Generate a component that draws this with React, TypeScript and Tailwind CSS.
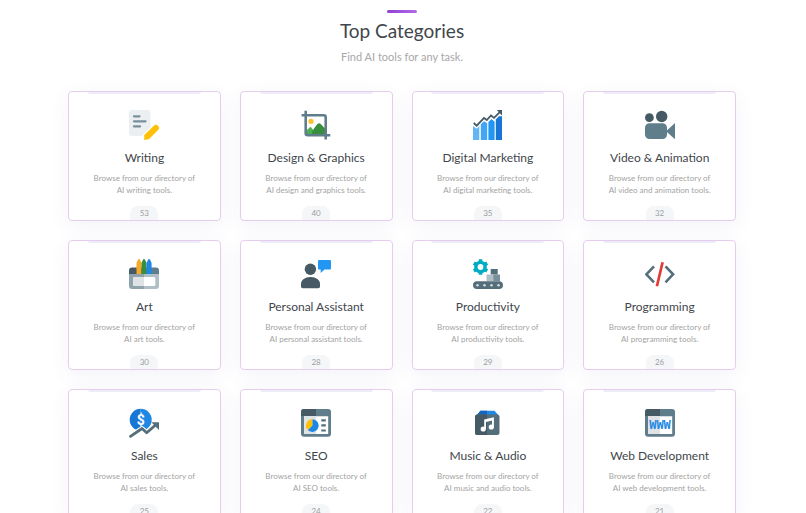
import React from "react";

interface Category {
  name: string;
  topic: string;
  count: number;
  icon: React.ReactNode;
}

const categories: Category[] = [
  {
    name: "Writing",
    topic: "AI writing tools.",
    count: 53,
    icon: (
      <>
        <path d="M3 0h15.5a3 3 0 0 1 3 3v14.5L13 26H3a3 3 0 0 1-3-3V3a3 3 0 0 1 3-3z" fill="#eceff1" />
        <path d="M5 6.3h5.5M5 11.3h11.5M5 16.4h6" stroke="#78909c" strokeWidth="2.3" strokeLinecap="round" />
        <path
          d="M15.2 25l9.6-9.3a3 3 0 0 1 4.3 4.3L19.8 29.2l-4.6.8z"
          fill="#ffc107"
          stroke="#fff"
          strokeWidth="2"
          paintOrder="stroke"
        />
      </>
    ),
  },
  {
    name: "Design & Graphics",
    topic: "AI design and graphics tools.",
    count: 40,
    icon: (
      <>
        <circle cx="10" cy="11.3" r="2.6" fill="#fbc02d" />
        <path d="M5 21l4.5-4.3L16 24.5H5z" fill="#4caf50" />
        <path d="M10.5 24.5c1-5 4-8 6-10.4a2.2 2.2 0 0 1 3.2-.2l4.3 4.6v6z" fill="#388e3c" />
        <path
          d="M4.7.7v22.6a2 2 0 0 0 2 2h22.6M.6 5.3h22.1a2 2 0 0 1 2 2v22.1"
          fill="none"
          stroke="#607d8b"
          strokeWidth="2.6"
        />
      </>
    ),
  },
  {
    name: "Digital Marketing",
    topic: "AI digital marketing tools.",
    count: 35,
    icon: (
      <>
        <path d="M0 16l3.7 2.7L6.3 16v14H0z" fill="#64b5f6" />
        <path d="M7.8 14.3L11 11.3l3.2 2V30H7.8z" fill="#42a5f5" />
        <path d="M15.4 12.1L18.5 9l3.1 2.7V30h-6.2z" fill="#2196f3" />
        <path d="M22.8 9.5l3-3.2H29V30h-6.2z" fill="#1976d2" />
        <path d="M.7 13l3 2.7L11 8l2.8 2L18 5.5l3 2.4 5.8-5.7" fill="none" stroke="#455a64" strokeWidth="1.8" />
        <path d="M23.8 0H29v5.4z" fill="#455a64" />
      </>
    ),
  },
  {
    name: "Video & Animation",
    topic: "AI video and animation tools.",
    count: 32,
    icon: (
      <>
        <circle cx="4.4" cy="7.7" r="4.4" fill="#455a64" />
        <circle cx="16.7" cy="6.5" r="5.7" fill="#455a64" />
        <rect y="13.3" width="22" height="15.7" rx="4.5" fill="#607d8b" />
        <path d="M21 21.2l9-8.2v16.3z" fill="#607d8b" />
      </>
    ),
  },
  {
    name: "Art",
    topic: "AI art tools.",
    count: 30,
    icon: (
      <>
        <path d="M0 16v-4.5a3 3 0 0 1 3-3h12V16z" fill="#455a64" />
        <path d="M15 8.5h12a3 3 0 0 1 3 3V16H15z" fill="#607d8b" />
        <path d="M7.5 15V4L9.2.3h1.6L12.5 4v11z" fill="#f9a825" />
        <path d="M12.5 15V4L14.2.3h1.6L17.5 4v11z" fill="#388e3c" />
        <path d="M17.5 15V4L19.3.3h1.6L22.6 4v11z" fill="#1e88e5" />
        <path d="M0 15h15v15H3a3 3 0 0 1-3-3z" fill="#90a4ae" />
        <path d="M15 15h15v12a3 3 0 0 1-3 3H15z" fill="#b0bec5" />
        <rect x="4" y="18" width="22.3" height="9" rx="1.5" fill="#fff" />
        <path d="M5.5 18H15v9H5.5A1.5 1.5 0 0 1 4 25.5v-6A1.5 1.5 0 0 1 5.5 18z" fill="#dfe3e6" />
      </>
    ),
  },
  {
    name: "Personal Assistant",
    topic: "AI personal assistant tools.",
    count: 28,
    icon: (
      <>
        <circle cx="9.4" cy="10.3" r="5.7" fill="#455a64" />
        <path d="M0 27.5V25c0-4 4-7 9.5-7s9.5 3 9.5 7v2.5a1.7 1.7 0 0 1-1.7 1.7H1.7A1.7 1.7 0 0 1 0 27.5z" fill="#455a64" />
        <path d="M18 1h11a1 1 0 0 1 1 1v7.5a1 1 0 0 1-1 1h-5.5L19.7 14v-3.5H18a1 1 0 0 1-1-1V2a1 1 0 0 1 1-1z" fill="#2196f3" />
      </>
    ),
  },
  {
    name: "Productivity",
    topic: "AI productivity tools.",
    count: 29,
    icon: (
      <>
        <circle cx="7.5" cy="8" r="4.6" fill="none" stroke="#00acc1" strokeWidth="3.4" />
        <path
          d="M7.5.2v2.6M7.5 13.2v2.6M.8 4.1l2.2 1.3M12 10.6l2.2 1.3M.8 11.9l2.2-1.3M12 5.4l2.2-1.3"
          stroke="#00acc1"
          strokeWidth="3.6"
        />
        <path d="M17.7 10h7v5.5h-7z" fill="#546e7a" />
        <path d="M13.5 15.5h6.7V22h-6.7z" fill="#b0bec5" />
        <path d="M20.2 15.5H27V22h-6.8z" fill="#78909c" />
        <rect y="22.2" width="30" height="7.8" rx="3.9" fill="#546e7a" />
        <g fill="#cfd8dc">
          <circle cx="4.5" cy="26.2" r="1.3" />
          <circle cx="11.5" cy="26.2" r="1.3" />
          <circle cx="18.5" cy="26.2" r="1.3" />
          <circle cx="25.5" cy="26.2" r="1.3" />
        </g>
      </>
    ),
  },
  {
    name: "Programming",
    topic: "AI programming tools.",
    count: 26,
    icon: (
      <>
        <path d="M9 7.3l-7.6 8 7.6 8M20.5 7.3l7.6 8-7.6 8" fill="none" stroke="#546e7a" strokeWidth="2.6" />
        <path d="M17.6 3.2L11.9 27.3" stroke="#e53935" strokeWidth="2.7" />
      </>
    ),
  },
  {
    name: "Sales",
    topic: "AI sales tools.",
    count: 25,
    icon: (
      <>
        <path d="M11.7.7a11 11 0 0 0 0 22z" fill="#1976d2" />
        <path d="M11.7.7a11 11 0 0 1 0 22z" fill="#1e88e5" />
        <text x="11.7" y="16.5" textAnchor="middle" fontSize="14" fontWeight="700" fill="#fff" fontFamily="Roboto, sans-serif">
          $
        </text>
        <g fill="none" strokeLinejoin="round">
          <path d="M.8 28.5L13 20.5l4.7 4.2 8.3-7.2" stroke="#fff" strokeWidth="5" />
          <path d="M1.5 28.3L13 20.5l4.7 4.2 8.3-7.2" stroke="#546e7a" strokeWidth="2.8" strokeLinecap="round" />
        </g>
        <path d="M22.3 14.3H30V22z" fill="#546e7a" />
      </>
    ),
  },
  {
    name: "SEO",
    topic: "AI SEO tools.",
    count: 24,
    icon: (
      <>
        <rect y="1" width="30" height="27.7" rx="3" fill="#607d8b" />
        <path d="M3 1h12v7H0V4a3 3 0 0 1 3-3z" fill="#455a64" />
        <path d="M3 8.3h24.2V26H3z" fill="#fff" />
        <path d="M3 8.3h12V26H3z" fill="#dfe3e6" />
        <path d="M11.3 17.6v-6.3a6.3 6.3 0 1 1-4.5 10.7z" fill="#1e88e5" />
        <path d="M11.3 17.6L6.8 22a6.3 6.3 0 0 1 4.5-10.7z" fill="#ffc107" />
        <path d="M20.3 12.3h4.5M20.3 17.4h4.5M20.3 22.5h4.5" stroke="#546e7a" strokeWidth="2.2" />
      </>
    ),
  },
  {
    name: "Music & Audio",
    topic: "AI music and audio tools.",
    count: 22,
    icon: (
      <>
        <path d="M7.5 2.7h14L26 8H3z" fill="#1e88e5" />
        <path d="M7.5 2.7H14V8H3z" fill="#1565c0" />
        <rect x="2" y="6.5" width="24.5" height="20.5" rx="2.5" fill="#546e7a" />
        <path d="M4.5 6.5H14V27H4.5A2.5 2.5 0 0 1 2 24.5V9a2.5 2.5 0 0 1 2.5-2.5z" fill="#455a64" />
        <g fill="#fff">
          <circle cx="10.2" cy="21" r="2.6" />
          <circle cx="18.3" cy="19" r="2.6" />
          <path d="M11.2 11.6l9.7-2.3v9.7h-1.9v-6.6l-6 1.5V21h-1.8z" />
        </g>
      </>
    ),
  },
  {
    name: "Web Development",
    topic: "AI web development tools.",
    count: 21,
    icon: (
      <>
        <rect y="1" width="30" height="27.7" rx="3" fill="#607d8b" />
        <path d="M3 1h12v7H0V4a3 3 0 0 1 3-3z" fill="#455a64" />
        <path d="M3 8.3h24.2V26H3z" fill="#fff" />
        <path d="M3 8.3h12V26H3z" fill="#dfe3e6" />
        <text x="15" y="21" textAnchor="middle" fontSize="12" fontWeight="700" fill="#1e88e5" fontFamily="'DejaVu Sans Mono', monospace">
          WWW
        </text>
      </>
    ),
  },
];

function CategoryCard({ name, topic, count, icon }: Category) {
  return (
    <a
      href="#"
      className="flex flex-col items-center overflow-hidden rounded-[4px] border border-[#e6cdee] bg-white text-center shadow-[0_5px_20px_rgba(90,80,190,0.07)]"
    >
      <span className="h-0.5 w-3/4 rounded-b bg-[#efecf9]" />
      <svg viewBox="0 0 30 30" className="mt-4 size-[30px]" aria-hidden="true">
        {icon}
      </svg>
      <h3 className="mt-2 text-xs leading-5 text-[#41464b]">{name}</h3>
      <p className="mt-1 text-[8px] leading-3 text-[#a3a3a3]">
        Browse from our directory of
        <br />
        {topic}
      </p>
      <span className="mt-2.5 h-3.5 w-7 rounded-t-lg bg-[#f5f6f8] text-[8px] leading-[14px] text-[#999ea3]">
        {count}
      </span>
    </a>
  );
}

export default function App() {
  return (
    <main className="min-h-screen bg-white pt-2.5 pr-0.5 pb-5 font-['Lato','Noto_Sans',sans-serif]">
      <header className="flex flex-col items-center pb-6 text-center">
        <span className="h-[3px] w-[30px] rounded-sm bg-gradient-to-r from-[#8f3fd4] to-[#b06be6]" />
        <h2 className="mt-1 text-[19px] leading-7 text-[#41464b]">Top Categories</h2>
        <p className="mt-0.5 text-[11px] leading-5 text-[#a8a8a8]">Find AI tools for any task.</p>
      </header>
      <section className="mx-auto grid max-w-[668px] grid-cols-2 gap-[19px] sm:grid-cols-4">
        {categories.map((category) => (
          <CategoryCard key={category.name} {...category} />
        ))}
      </section>
    </main>
  );
}
